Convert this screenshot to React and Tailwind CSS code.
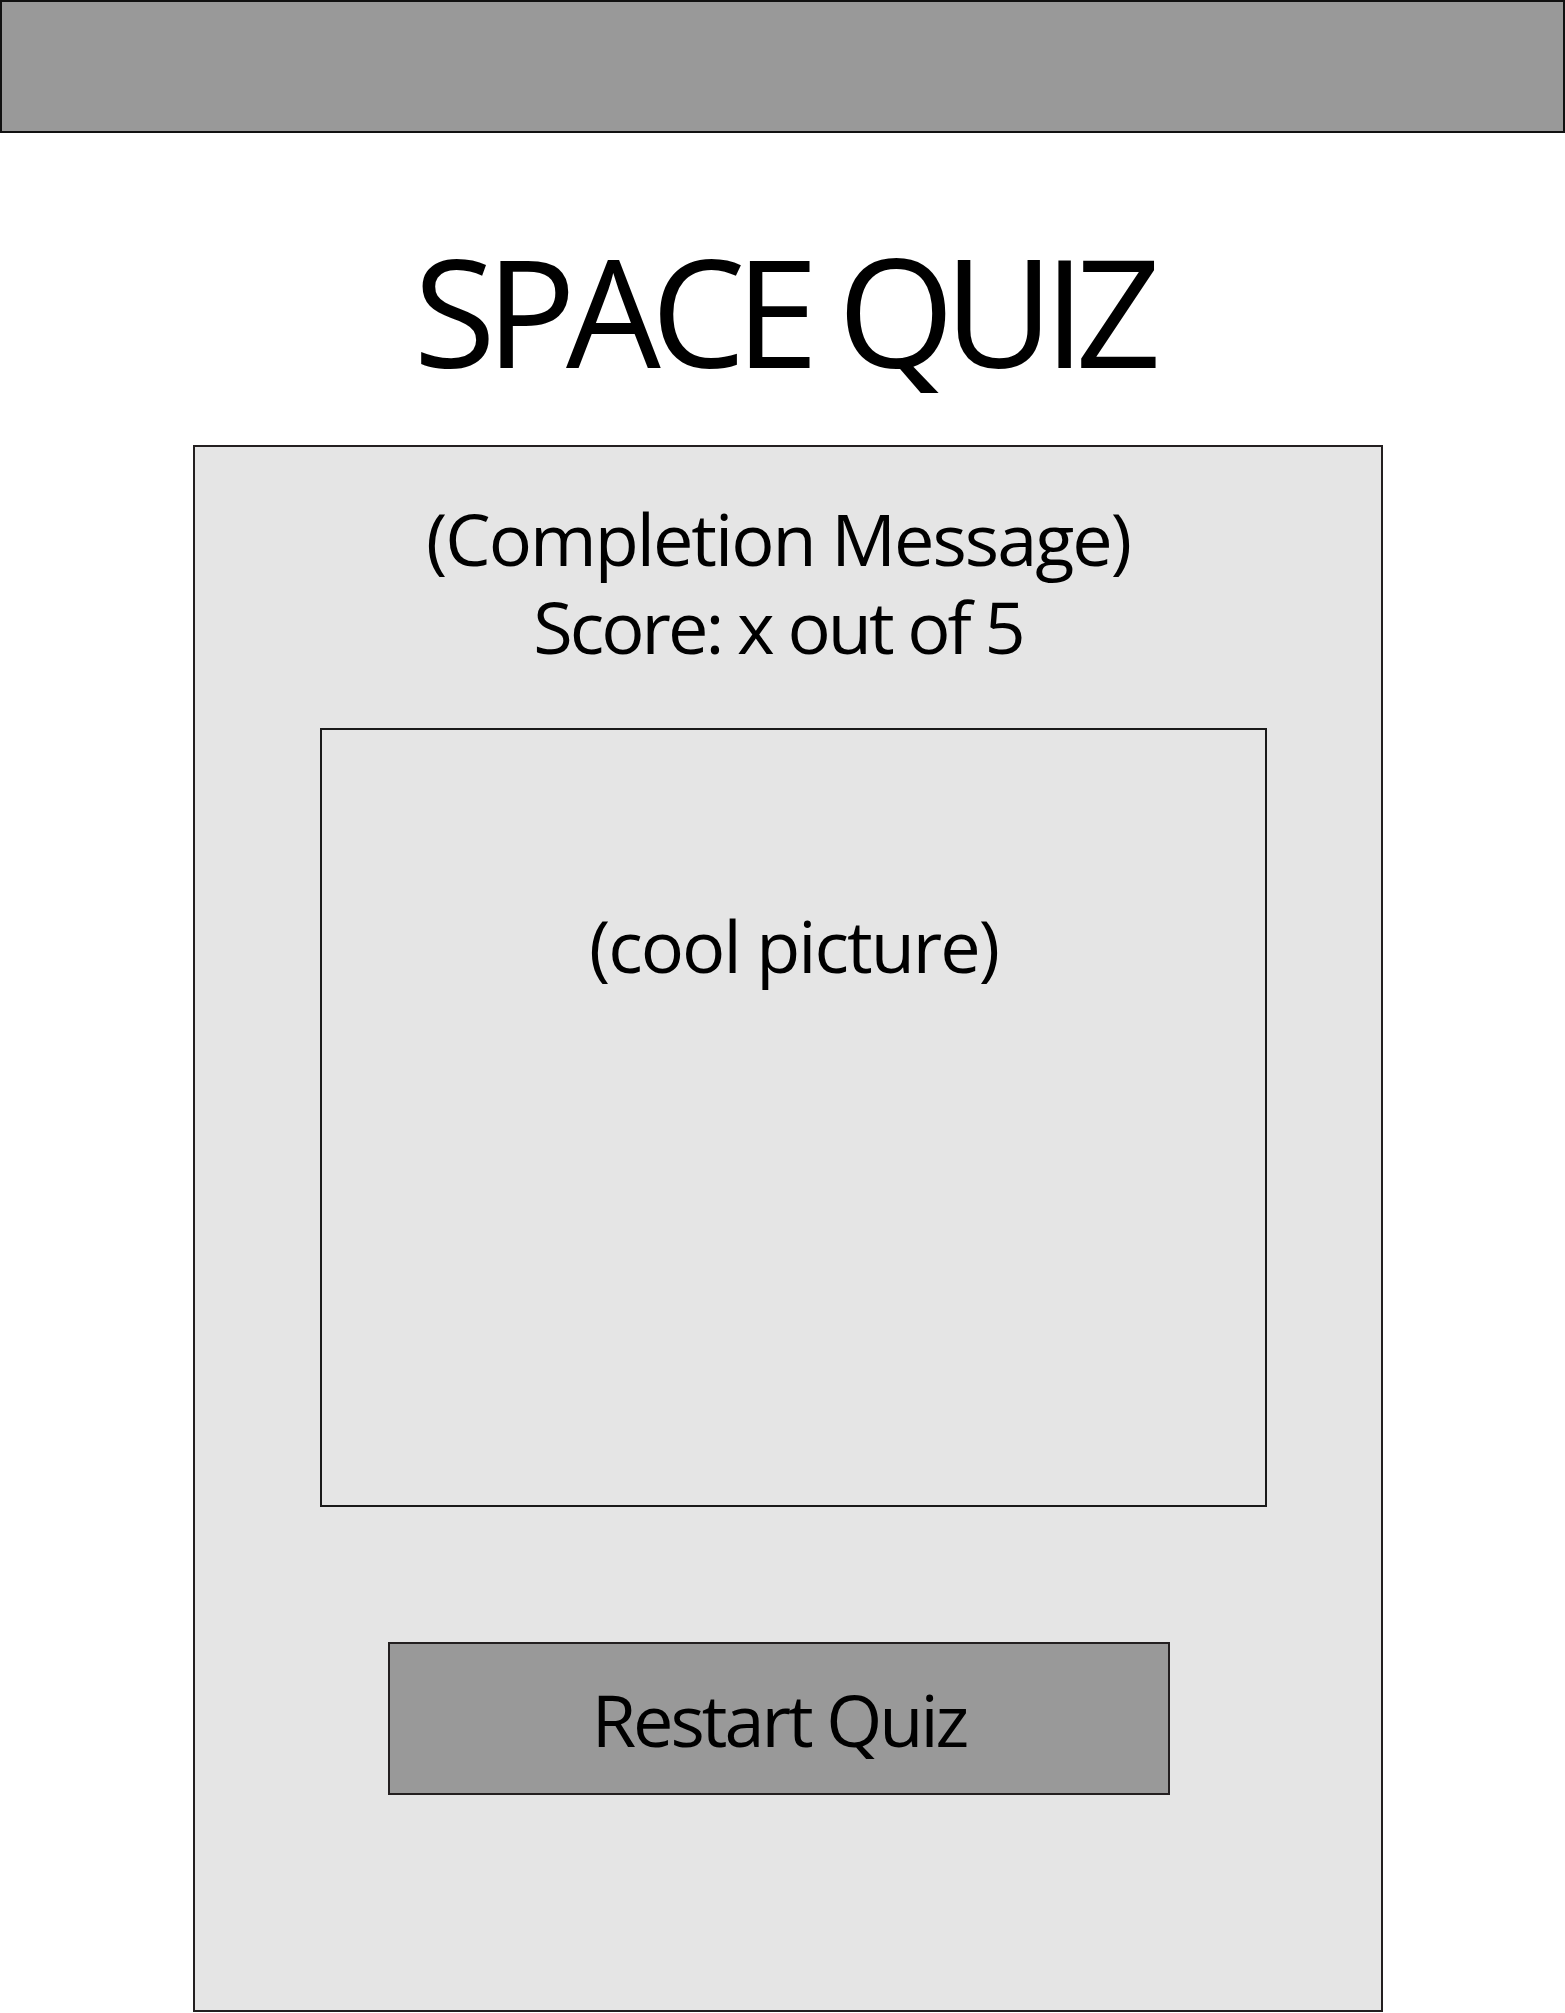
export default function App() {
  return (
    <div className="min-h-screen bg-white font-['Open_Sans',sans-serif] text-black">
      {/* Top bar */}
      <header className="h-[133px] w-full bg-[#999999] border-2 border-[#111111]" />

      {/* Title */}
      <h1 className="mt-[102px] text-center text-[150px] leading-none tracking-[-10px]">SPACE QUIZ</h1>

      {/* Result card */}
      <section className="ml-[193px] mt-[60px] w-[1190px] h-[1567px] bg-[#e5e5e5] border-2 border-[#231f20] pt-[47px]">
        <div className="pr-[20px] text-center text-[72px] leading-[88px] tracking-[-2px]">
          <p>(Completion Message)</p>
          <p className="tracking-[-3px]">Score: x out of 5</p>
        </div>

        <div className="ml-[125px] mt-[58px] w-[947px] h-[779px] border-2 border-[#1a1a1a] pt-[179px] text-center">
          <p className="text-[72px] leading-none tracking-[-2px]">(cool picture)</p>
        </div>

        <button className="ml-[193px] mt-[135px] w-[782px] h-[153px] flex items-center justify-center bg-[#999999] border-2 border-[#231f20] text-[72px] leading-none tracking-[-3px]">
          Restart Quiz
        </button>
      </section>
    </div>
  );
}
